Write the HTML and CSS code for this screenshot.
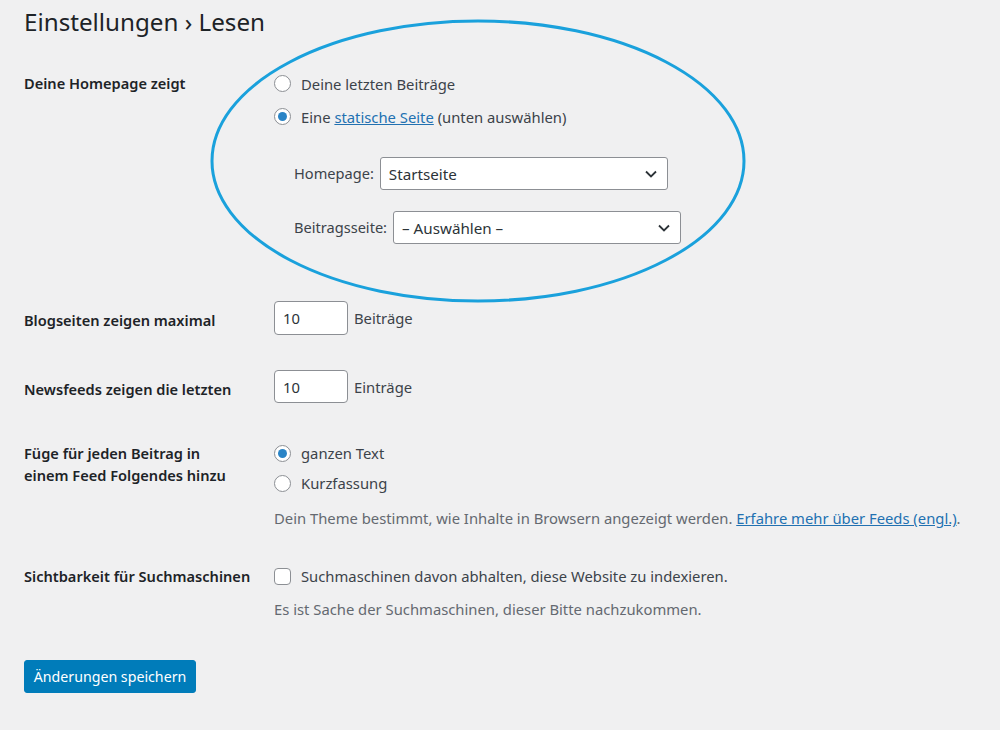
FILE: index.html
```html
<!DOCTYPE html>
<html lang="de">
<head>
<meta charset="utf-8">
<title>Einstellungen › Lesen</title>
<link rel="stylesheet" href="styles.css">
</head>
<body>
<div class="wrap">
  <h1 class="title">Einstellungen › Lesen</h1>

  <div class="row row-home">
    <div class="th">Deine Homepage zeigt</div>
    <div class="td">
      <div class="opt opt-33"><span class="radio"></span><span>Deine letzten Beiträge</span></div>
      <div class="opt opt-33"><span class="radio checked"></span><span>Eine <a href="#" class="link">statische Seite</a> (unten auswählen)</span></div>
      <div class="selects">
        <div class="sel-row sel-first">
          <span class="sel-label">Homepage:</span>
          <div class="select select-home"><span>Startseite</span><svg class="chev" viewBox="0 0 12 8" width="12" height="8"><path d="M1 1.5 L6 6.5 L11 1.5" fill="none" stroke="#2c3338" stroke-width="1.8"/></svg></div>
        </div>
        <div class="sel-row sel-second">
          <span class="sel-label">Beitragsseite:</span>
          <div class="select select-post"><span>– Auswählen –</span><svg class="chev" viewBox="0 0 12 8" width="12" height="8"><path d="M1 1.5 L6 6.5 L11 1.5" fill="none" stroke="#2c3338" stroke-width="1.8"/></svg></div>
        </div>
      </div>
    </div>
  </div>

  <div class="row row-blog">
    <div class="th th-mid">Blogseiten zeigen maximal</div>
    <div class="td td-inline">
      <div class="num num-34">10</div><span class="unit">Beiträge</span>
    </div>
  </div>

  <div class="row row-news">
    <div class="th th-mid">Newsfeeds zeigen die letzten</div>
    <div class="td td-inline">
      <div class="num num-33">10</div><span class="unit">Einträge</span>
    </div>
  </div>

  <div class="row row-feed">
    <div class="th th-two">Füge für jeden Beitrag in<br>einem Feed Folgendes hinzu</div>
    <div class="td">
      <div class="opt opt-30"><span class="radio checked"></span><span>ganzen Text</span></div>
      <div class="opt opt-30"><span class="radio"></span><span>Kurzfassung</span></div>
      <p class="desc desc-feed">Dein Theme bestimmt, wie Inhalte in Browsern angezeigt werden. <a href="#" class="link">Erfahre mehr über Feeds (engl.)</a>.</p>
    </div>
  </div>

  <div class="row row-search">
    <div class="th th-check">Sichtbarkeit für Suchmaschinen</div>
    <div class="td">
      <div class="opt opt-30"><span class="check"></span><span>Suchmaschinen davon abhalten, diese Website zu indexieren.</span></div>
      <p class="desc desc-search">Es ist Sache der Suchmaschinen, dieser Bitte nachzukommen.</p>
    </div>
  </div>

  <div class="submit">
    <button class="button-primary" type="button">Änderungen speichern</button>
  </div>

  <svg class="highlight" width="540" height="288" viewBox="0 0 540 288"><ellipse cx="270" cy="144" rx="266" ry="140" fill="none" stroke="#1aa1dc" stroke-width="3"/></svg>
</div>
</body>
</html>
```

FILE: styles.css
```css
html, body {
  margin: 0;
  padding: 0;
  background: #f0f0f1;
}
body {
  font-family: "Noto Sans", "Open Sans", sans-serif;
  font-size: 14.8px;
  color: #3c434a;
}
.wrap {
  position: relative;
  padding: 0 24px;
  height: 730px;
  box-sizing: border-box;
}
.title {
  margin: 0;
  padding-top: 6px;
  font-size: 24.2px;
  line-height: 31px;
  font-weight: 400;
  color: #1d2327;
}
.row {
  display: flex;
}
.th {
  width: 250px;
  flex: none;
  font-weight: 600;
  font-size: 14.6px;
  color: #1d2327;
  line-height: 22px;
}
.td {
  flex: 1;
}
.row-home { margin-top: 30px; }
.row-home .th { padding-top: 5px; }
.opt {
  display: flex;
  align-items: center;
  gap: 10px;
}
.opt-33 { height: 33px; }
.opt-30 { height: 30px; }
.radio {
  width: 17px;
  height: 17px;
  box-sizing: border-box;
  border: 1px solid #8c8f94;
  border-radius: 50%;
  background: #fff;
  flex: none;
  display: flex;
  align-items: center;
  justify-content: center;
}
.radio.checked::after {
  content: "";
  width: 9px;
  height: 9px;
  border-radius: 50%;
  background: #2a84c6;
}
.check {
  width: 17px;
  height: 17px;
  box-sizing: border-box;
  border: 1px solid #8c8f94;
  border-radius: 4px;
  background: #fff;
  flex: none;
}
.link {
  color: #2271b1;
  text-decoration: underline;
}
.selects {
  padding-left: 20px;
}
.sel-row {
  display: flex;
  align-items: center;
  gap: 6px;
  color: #3c434a;
}
.sel-first { margin-top: 24px; }
.sel-second { margin-top: 21px; }
.sel-label { position: relative; top: -1px; font-size: 14.6px; }
.select {
  height: 33px;
  box-sizing: border-box;
  border: 1px solid #8c8f94;
  border-radius: 3px;
  background: #fff;
  display: flex;
  align-items: center;
  justify-content: space-between;
  padding: 0 10px 0 8px;
  color: #2c3338;
  font-size: 15.2px;
}
.select-home { width: 288px; }
.select-post { width: 288px; }
.chev { flex: none; }
.row-blog { margin-top: 57px; }
.row-news { margin-top: 35px; }
.th-mid {
  display: flex;
  align-items: center;
  padding-top: 4px;
}
.td-inline {
  display: flex;
  align-items: center;
  gap: 6px;
}
.num {
  width: 74px;
  box-sizing: border-box;
  border: 1px solid #8c8f94;
  border-radius: 4px;
  background: #fff;
  display: flex;
  align-items: center;
  padding-left: 8px;
  color: #2c3338;
}
.num-34 { height: 34px; }
.num-33 { height: 33px; }
.unit { color: #3c434a; }
.row-feed { margin-top: 35px; }
.th-two { padding-top: 4px; }
.desc {
  margin: 0;
  line-height: 20px;
  color: #646970;
}
.desc-feed { margin-top: 10px; }
.row-search { margin-top: 33px; }
.th-check { padding-top: 4px; }
.desc-search { margin-top: 8px; }
.submit { margin-top: 41px; }
.button-primary {
  height: 33px;
  width: 172px;
  background: #007cba;
  border: 1px solid #007cba;
  border-radius: 3px;
  color: #fff;
  font-family: inherit;
  font-size: 14.2px;
  padding: 0 4px;
  white-space: nowrap;
  cursor: pointer;
}
.highlight {
  position: absolute;
  left: 208px;
  top: 17px;
  pointer-events: none;
}
```
